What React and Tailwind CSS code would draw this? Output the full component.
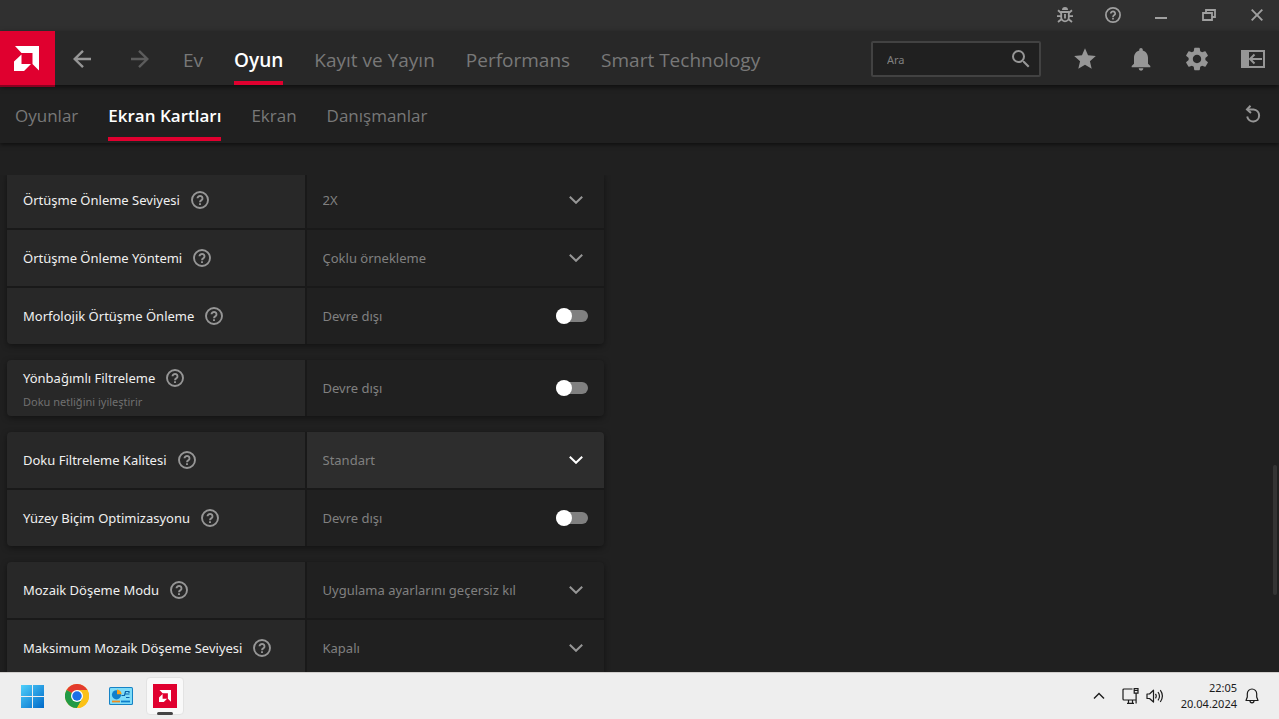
import React, { useState } from 'react';
import { MdNotifications, MdSearch, MdSettings, MdStar } from 'react-icons/md';

const mainTabs = ['Ev', 'Oyun', 'Kayıt ve Yayın', 'Performans', 'Smart Technology'];
const subTabs = ['Oyunlar', 'Ekran Kartları', 'Ekran', 'Danışmanlar'];

const groups = [
  [
    { id: 'aa-level', label: 'Örtüşme Önleme Seviyesi', type: 'select', options: ['2X', '4X', '8X'] },
    { id: 'aa-method', label: 'Örtüşme Önleme Yöntemi', type: 'select', options: ['Çoklu örnekleme'] },
    { id: 'mlaa', label: 'Morfolojik Örtüşme Önleme', type: 'toggle' },
  ],
  [
    { id: 'aniso', label: 'Yönbağımlı Filtreleme', hint: 'Doku netliğini iyileştirir', type: 'toggle' },
  ],
  [
    { id: 'texture', label: 'Doku Filtreleme Kalitesi', type: 'select', options: ['Standart'], active: true },
    { id: 'surface', label: 'Yüzey Biçim Optimizasyonu', type: 'toggle' },
  ],
  [
    { id: 'tess-mode', label: 'Mozaik Döşeme Modu', type: 'select', options: ['Uygulama ayarlarını geçersiz kıl'] },
    { id: 'tess-level', label: 'Maksimum Mozaik Döşeme Seviyesi', type: 'select', options: ['Kapalı'] },
  ],
];

const AmdMark = ({ className }) => (
  <svg viewBox="0 0 25 25" className={className} fill="currentColor" aria-hidden="true">
    <path d="M1 0H25V24.5L18.5 18V7H7.5Z" />
    <path d="M0 15.500L7.500 8.500V18H17L10 25H0Z" />
  </svg>
);

const HelpIcon = ({ className }) => (
  <svg viewBox="0 0 18 18" className={className} fill="none" stroke="currentColor" strokeWidth="1.900" aria-hidden="true">
    <circle cx="9" cy="9" r="8" />
    <path d="M6.500 7.300a2.500 2.300 0 1 1 4 1.800Q9 10 9 11.200M9 12.200v1.800" />
  </svg>
);

const BugIcon = () => (
  <svg viewBox="0 0 16 16" className="size-4" fill="none" stroke="currentColor" strokeWidth="1.800" aria-hidden="true">
    <path d="M5 3a3 3 0 0 1 6 0z" fill="currentColor" stroke="none" />
    <path d="M4.200 5h7.600v5.500a3.800 3.800 0 0 1-7.600 0z" />
    <path d="M0 9.200h4M12 9.200h4M1 3.200 4.200 6M15 3.200 11.800 6M1 15l3.400-2.800M15 15l-3.400-2.800M8 7v4.500" />
  </svg>
);

const MinimizeIcon = () => (
  <svg viewBox="0 0 16 16" className="size-4" aria-hidden="true">
    <path d="M2 10h12v2H2z" fill="currentColor" />
  </svg>
);

const RestoreIcon = () => (
  <svg viewBox="0 0 16 16" className="size-4" fill="none" stroke="currentColor" strokeWidth="1.800" aria-hidden="true">
    <path d="M2 6h9v7H2zM5 6V3h9v7h-3" />
  </svg>
);

const CloseIcon = () => (
  <svg viewBox="0 0 16 16" className="size-4" fill="none" stroke="currentColor" strokeWidth="1.900" aria-hidden="true">
    <path d="M2.700 2.700l10.600 10.600M13.300 2.700 2.700 13.300" />
  </svg>
);

const ArrowIcon = ({ className }) => (
  <svg viewBox="0 0 18 18" className={className} fill="none" stroke="currentColor" strokeWidth="2.400" aria-hidden="true">
    <path d="M18 9H2M10 .9 1.700 9l8.300 8.100" />
  </svg>
);

const PanelIcon = () => (
  <svg viewBox="0 0 24 18" className="h-[18px] w-6" fill="none" stroke="currentColor" strokeWidth="2" aria-hidden="true">
    <path d="M0 0h8v18H0z" fill="currentColor" stroke="none" />
    <path d="M1 1h22v16H1zM8.500 9H21M13.500 4.500 9 9l4.500 4.500" />
  </svg>
);

const ResetIcon = () => (
  <svg viewBox="0 0 16 18" className="h-[18px] w-4" fill="none" stroke="currentColor" strokeWidth="2" aria-hidden="true">
    <path d="M5.500 .8 2 4.500 6 8" />
    <path d="M2.300 4.500h6.300a6 6 0 1 1-6.400 7" />
  </svg>
);

const ChevronIcon = ({ className }) => (
  <svg viewBox="0 0 14 8" className={className} fill="none" stroke="currentColor" strokeWidth="2" aria-hidden="true">
    <path d="M.8.800 7 6.800 13.200.800" />
  </svg>
);

const Toggle = ({ id }) => {
  const [on, setOn] = useState(false);
  return (
    <div className="flex h-full items-center justify-between px-4">
      <span className="pt-0.5 text-[#808080]">{on ? 'Etkin' : 'Devre dışı'}</span>
      <input
        id={id}
        type="checkbox"
        role="switch"
        checked={on}
        onChange={(e) => setOn(e.target.checked)}
        className="relative h-3 w-8 cursor-pointer appearance-none rounded-full bg-[#808080] before:absolute before:-top-0.5 before:left-0 before:size-4 before:rounded-full before:bg-white checked:bg-[#e0002f] checked:before:left-4"
      />
    </div>
  );
};

const Dropdown = ({ id, options, active }) => (
  <div className="relative h-full">
    <select
      id={id}
      className="h-full w-full cursor-pointer appearance-none bg-transparent pt-0.5 pr-12 pl-4 text-[#808080] outline-none"
    >
      {options.map((option) => (
        <option key={option}>{option}</option>
      ))}
    </select>
    <ChevronIcon
      className={`pointer-events-none absolute top-6 right-[21px] h-2 w-3.5 ${active ? 'text-white' : 'text-[#969696]'}`}
    />
  </div>
);

const SettingRow = ({ item }) => (
  <div className="grid h-14 grid-cols-2 gap-0.5">
    <div className={`flex flex-col justify-center gap-1 bg-[#282828] px-4 ${item.hint ? 'pt-1' : ''}`}>
      <div className="flex items-center gap-[11px]">
        <label htmlFor={item.id} className="leading-5 text-[#f0f0f0]">{item.label}</label>
        <button type="button" aria-label={`${item.label} hakkında`} className="text-[#969696]">
          <HelpIcon className="size-[18px]" />
        </button>
      </div>
      {item.hint && <p className="text-[11px] leading-5 text-[#707070]">{item.hint}</p>}
    </div>
    <div className={item.active ? 'bg-[#2d2d2d]' : 'bg-[#202020]'}>
      {item.type === 'toggle' ? <Toggle id={item.id} /> : <Dropdown {...item} />}
    </div>
  </div>
);

const TitleBar = () => (
  <div className="flex h-[31px] shrink-0 items-center justify-end gap-6 bg-[#303030] pr-2.5 pb-px text-[#a0a0a0]">
    <button type="button" aria-label="Hata bildir" className="flex w-6 justify-center"><BugIcon /></button>
    <button type="button" aria-label="Yardım" className="flex w-6 justify-center"><HelpIcon className="size-4" /></button>
    <button type="button" aria-label="Küçült" className="flex w-6 justify-center"><MinimizeIcon /></button>
    <button type="button" aria-label="Geri yükle" className="flex w-6 justify-center"><RestoreIcon /></button>
    <button type="button" aria-label="Kapat" className="flex w-6 justify-center"><CloseIcon /></button>
  </div>
);

const Header = () => (
  <header className="relative z-20 flex h-[54px] shrink-0 items-center bg-[#282828] shadow-[0_2px_5px_rgba(0,0,0,0.6)]">
    <a href="#home" aria-label="AMD" className="flex h-14 w-[55px] shrink-0 items-center self-start border-b-2 border-[#8a0020] bg-[#e0002f] pl-3.5 text-white">
      <AmdMark className="size-[25px]" />
    </a>
    <button type="button" aria-label="Geri" className="ml-[18px] pt-0.5 text-[#969696]"><ArrowIcon className="size-[18px]" /></button>
    <button type="button" aria-label="İleri" className="ml-10 pt-0.5 text-[#5c5c5c]"><ArrowIcon className="size-[18px] rotate-180" /></button>
    <nav className="ml-[34px] flex h-full gap-[31px] font-['Open_Sans','Noto_Sans',sans-serif] text-[19px]">
      {mainTabs.map((tab) => (
        <a
          key={tab}
          href="#tab"
          className={`flex items-center border-b-4 pt-2 whitespace-nowrap ${tab === 'Oyun' ? 'border-[#e0002f] font-semibold text-white' : 'border-transparent text-[#787878]'}`}
        >
          {tab}
        </a>
      ))}
    </nav>
    <div className="ml-auto flex items-center gap-8 pt-0.5 pr-3.5 text-[#969696]">
      <label className="flex h-9 w-[170px] items-center rounded-xs border-2 border-[#424242] bg-[#202020] pr-1.5 pl-3.5">
        <input type="text" placeholder="Ara" aria-label="Ara" className="w-full min-w-0 bg-transparent pt-0.5 text-[11px] outline-none placeholder:text-[#808080]" />
        <MdSearch className="size-6 shrink-0" />
      </label>
      <button type="button" aria-label="Favoriler" className="flex w-6 justify-center"><MdStar className="size-[26px] shrink-0" /></button>
      <button type="button" aria-label="Bildirimler" className="flex w-6 justify-center"><MdNotifications className="size-7 shrink-0" /></button>
      <button type="button" aria-label="Ayarlar" className="flex w-6 justify-center"><MdSettings className="size-7 shrink-0" /></button>
      <button type="button" aria-label="Kenar çubuğu"><PanelIcon /></button>
    </div>
  </header>
);

const SubHeader = () => (
  <div className="relative z-10 flex h-[58px] shrink-0 items-center justify-between bg-[#202020] pr-[18px] pl-[15px] shadow-[0_2px_4px_rgba(0,0,0,0.5)]">
    <nav className="flex h-14 gap-[30px] self-start font-['Open_Sans','Noto_Sans',sans-serif] text-[17px]">
      {subTabs.map((tab) => (
        <a
          key={tab}
          href="#sub"
          className={`flex items-center border-b-4 pt-2.5 whitespace-nowrap ${tab === 'Ekran Kartları' ? 'border-[#e0002f] font-semibold text-white' : 'border-transparent text-[#787878]'}`}
        >
          {tab}
        </a>
      ))}
    </nav>
    <button type="button" aria-label="Sıfırla" className="text-[#969696]"><ResetIcon /></button>
  </div>
);

const WindowsLogo = () => (
  <svg viewBox="0 0 23 23" className="size-[23px]" aria-hidden="true">
    <defs>
      <linearGradient id="win" x1="0" y1="0" x2="1" y2="1">
        <stop offset="0" stopColor="#4fd0fb" />
        <stop offset="1" stopColor="#0069c9" />
      </linearGradient>
    </defs>
    <path d="M0 0h11v11H0zM12 0h11v11H12zM0 12h11v11H0zM12 12h11v11H12z" fill="url(#win)" />
  </svg>
);

const ChromeLogo = () => (
  <svg viewBox="0 0 48 48" className="size-6" aria-hidden="true">
    <circle cx="24" cy="24" r="24" fill="#fbc116" />
    <path d="M24 24 3.200 12A24 24 0 0 1 44.800 12z" fill="#e33b2e" />
    <path d="M3.200 12A24 24 0 0 0 24 48l10.400-18L24 24z" fill="#229a46" />
    <path d="M24 12h20.800A24 24 0 0 1 24 48l10.400-18z" fill="#fbc116" />
    <circle cx="24" cy="24" r="12" fill="#fff" />
    <circle cx="24" cy="24" r="9.500" fill="#1a6fe8" />
  </svg>
);

const ControlPanelIcon = () => (
  <svg viewBox="0 0 24 18" className="h-[18px] w-6" aria-hidden="true">
    <rect width="24" height="18" rx="1.500" fill="#1583c6" />
    <rect x="1" y="1" width="22" height="16" rx=".8" fill="#7edcf8" />
    <circle cx="7.500" cy="7.800" r="4.600" fill="#0f7fcb" />
    <path d="M8 7.300V2.500a4.800 4.800 0 0 1 4.600 4.800z" fill="#f6a01a" />
    <path d="M3 14.500h8" stroke="#f08c1a" strokeWidth="1.800" />
    <path d="M12 14.500h9" stroke="#0f7fcb" strokeWidth="1.800" />
    <path d="M12.500 8.500h3l1-4h4M16 7h4.500M17 10.500h3.500M20 4v2" stroke="#0b63a8" strokeWidth="1.200" fill="none" />
  </svg>
);

const Taskbar = () => (
  <footer className="relative z-10 flex h-[47px] shrink-0 items-center justify-between border-t border-[#d0cecc] bg-[#eeeeee] pr-5 pl-[21px] text-[#1b1b1b]">
    <div className="flex items-center">
      <button type="button" aria-label="Başlat"><WindowsLogo /></button>
      <button type="button" aria-label="Chrome" className="ml-[21px]"><ChromeLogo /></button>
      <button type="button" aria-label="Denetim Masası" className="ml-5"><ControlPanelIcon /></button>
      <button type="button" aria-label="AMD Software" className="relative ml-[13px] flex h-[38px] w-[38px] items-center justify-center rounded-sm border border-[#e3e3e3] bg-[#f9f9f9]">
        <span className="flex size-6 items-center justify-center bg-[#e0002f] text-white"><AmdMark className="size-3" /></span>
        <span className="absolute -bottom-px left-2.5 h-[3px] w-4 rounded-full bg-[#444444]" />
      </button>
    </div>
    <div className="flex items-center">
      <button type="button" aria-label="Gizli simgeler">
        <svg viewBox="0 0 12 8" className="h-2 w-3" fill="none" stroke="currentColor" strokeWidth="1.400"><path d="M1 6.500 6 1.500l5 5" /></svg>
      </button>
      <button type="button" aria-label="Ağ" className="ml-[17px]">
        <svg viewBox="0 0 17 16" className="h-4 w-[17px]" fill="none" stroke="currentColor" strokeWidth="1.200">
          <path d="M10.500 1H2Q1 1 1 2v9q0 1 1 1h12M5 15.400h7M6.500 12v3M10.500 12v3M12.200.700h3.800v4.500h-3.800zM12 2.500h4M14.100 5.200V15.500" />
        </svg>
      </button>
      <button type="button" aria-label="Ses" className="ml-[7px]">
        <svg viewBox="0 0 18 14" className="h-3.5 w-[18px]" fill="none" stroke="currentColor" strokeWidth="1.200" strokeLinejoin="round">
          <path d="M1 5v4.500h2.500L7.500 13V1.200L3.500 5zM9.500 4.800q1.500 2.300 0 4.600M12 3q3 4.200 0 8.300M14.300 1.200q4.200 5.800 0 11.800" />
        </svg>
      </button>
      <div className="ml-[17px] text-right text-[11px] leading-4">
        <div>22:05</div>
        <div>20.04.2024</div>
      </div>
      <button type="button" aria-label="Bildirim merkezi" className="ml-2">
        <svg viewBox="0 0 14 16" className="h-4 w-3.5" fill="none" stroke="currentColor" strokeWidth="1.200" strokeLinejoin="round">
          <path d="M7 1a4.700 4.700 0 0 0-4.700 4.700V9L1 12.500h12L11.700 9V5.700A4.700 4.700 0 0 0 7 1zM5 12.800a2 2 0 0 0 4 0" />
        </svg>
      </button>
    </div>
  </footer>
);

const App = () => {
  return (
    <div className="flex h-screen flex-col overflow-hidden bg-[#202020] font-['Noto_Sans','Open_Sans',sans-serif] text-[13px]">
      <TitleBar />
      <Header />
      <SubHeader />
      <main className="mt-8 flex min-h-0 flex-1 justify-between overflow-hidden">
        {/* Settings list, scrolled slightly past the first row */}
        <div className="-mt-[3px] w-full max-w-[611px] px-[7px]">
          {groups.map((group) => (
            <section
              key={group[0].id}
              className="mb-4 rounded-sm shadow-[0_2px_6px_rgba(0,0,0,0.45)]"
            >
              <div className="flex flex-col gap-0.5 overflow-hidden rounded-sm bg-[#191919]">
                {group.map((item) => (
                  <SettingRow key={item.id} item={item} />
                ))}
              </div>
            </section>
          ))}
        </div>
        <div className="mt-[290px] mr-0.5 h-[130px] w-1 shrink-0 rounded-full bg-[#343434]" />
      </main>
      <Taskbar />
    </div>
  );
};

export default App;
